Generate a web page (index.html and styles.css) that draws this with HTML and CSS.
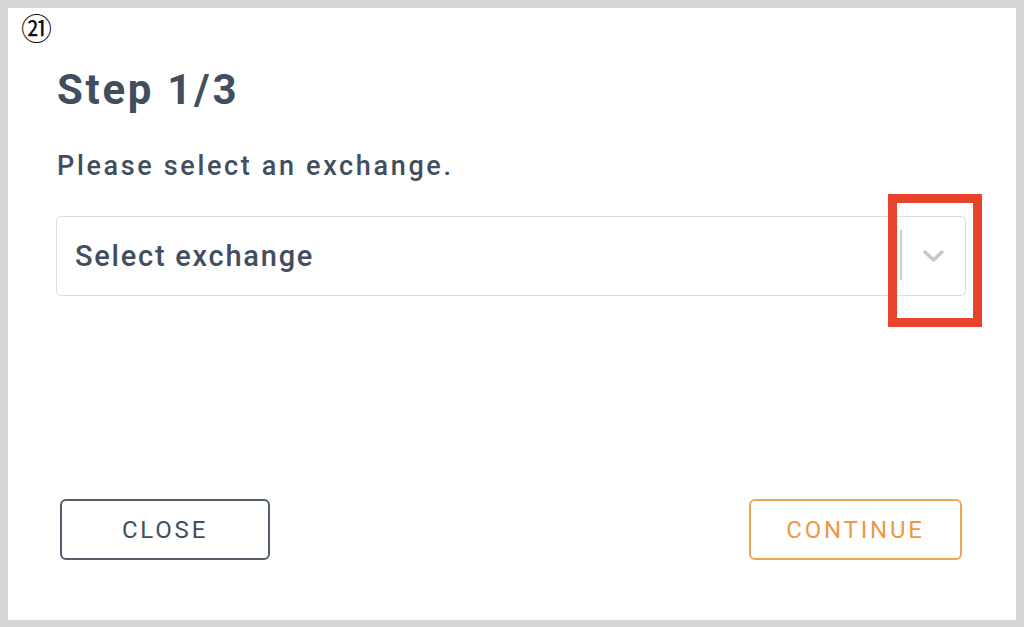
FILE: index.html
```html
<!DOCTYPE html>
<html lang="en">
<head>
<meta charset="utf-8">
<title>Step 1/3</title>
<link rel="stylesheet" href="styles.css">
</head>
<body>
<div class="panel">
  <div class="badge">㉑</div>
  <div class="content">
    <h1 class="title">Step 1/3</h1>
    <p class="prompt">Please select an exchange.</p>
    <div class="select">
      <span class="placeholder">Select exchange</span>
      <div class="indicators">
        <span class="separator"></span>
        <span class="chevron">
          <svg width="21" height="12" viewBox="0 0 21 12" aria-hidden="true"><path d="M2 2 L10.5 10 L19 2" fill="none" stroke="#c6c6c6" stroke-width="3.4" stroke-linecap="round" stroke-linejoin="round"/></svg>
        </span>
      </div>
    </div>
    <div class="actions">
      <button class="btn btn-close">CLOSE</button>
      <button class="btn btn-continue">CONTINUE</button>
    </div>
  </div>
  <div class="highlight"></div>
</div>
</body>
</html>
```

FILE: styles.css
```css
html, body {
  margin: 0;
  padding: 0;
}
body {
  background: #d6d6d6;
  padding: 8px 8px 7px 8px;
  height: 627px;
  box-sizing: border-box;
  font-family: Roboto, "Liberation Sans", sans-serif;
  color: #424e5e;
}
.panel {
  position: relative;
  background: #ffffff;
  height: 612px;
  display: flex;
  flex-direction: column;
}
.badge {
  font-family: "Noto Sans CJK JP", "DejaVu Sans", sans-serif;
  font-size: 31px;
  line-height: 24px;
  height: 24px;
  color: #111111;
  padding: 7px 0 0 13px;
}
.content {
  padding: 0 50px 0 48px;
  display: flex;
  flex-direction: column;
}
.title {
  margin: 26px 0 0 1px;
  font-size: 42px;
  line-height: 50px;
  font-weight: 700;
  letter-spacing: 2.7px;
}
.prompt {
  margin: 35px 0 0 1px;
  font-size: 27px;
  line-height: 32px;
  font-weight: 500;
  letter-spacing: 2.65px;
}
.select {
  margin-top: 34px;
  height: 80px;
  box-sizing: border-box;
  border: 1px solid #dddddd;
  border-radius: 5px;
  display: flex;
  align-items: center;
  justify-content: space-between;
}
.placeholder {
  padding-left: 18px;
  font-size: 29px;
  font-weight: 500;
  letter-spacing: 1.75px;
}
.indicators {
  display: flex;
  align-items: center;
  height: 100%;
}
.separator {
  width: 2px;
  height: 50px;
  background: #cccccc;
  margin-top: -2px;
}
.chevron {
  width: 63px;
  display: flex;
  justify-content: center;
  align-items: center;
}
.chevron svg {
  display: block;
}
.actions {
  margin-top: 203px;
  padding: 0 4px;
  display: flex;
  justify-content: space-between;
}
.btn {
  height: 61px;
  background: #ffffff;
  border-radius: 6px;
  font-family: Roboto, "Liberation Sans", sans-serif;
  font-size: 24px;
  font-weight: 400;
  letter-spacing: 2.8px;
  padding: 0;
  cursor: pointer;
}
.btn-close {
  width: 210px;
  border: 2px solid #535e6d;
  color: #424e5e;
}
.btn-continue {
  width: 213px;
  border: 2px solid #f0a555;
  color: #ef9843;
}
.highlight {
  position: absolute;
  left: 880px;
  top: 186px;
  width: 94px;
  height: 133px;
  box-sizing: border-box;
  border: 9px solid #e8432b;
}
```
